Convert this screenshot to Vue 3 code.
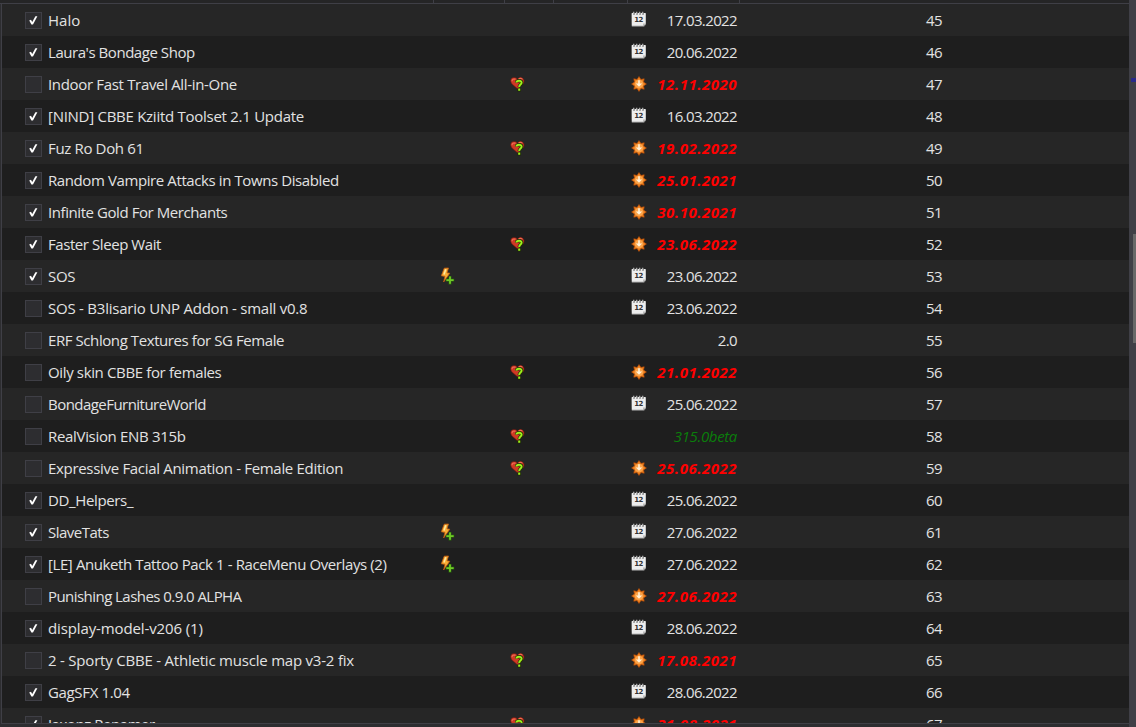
<template>
  <div class="mod-list">
    <div class="list-header">
      <span v-for="n in 6" :key="n"></span>
    </div>

    <div class="rows">
      <div v-for="mod in mods" :key="mod.priority" class="row">
        <div class="checkbox">
          <svg v-if="mod.enabled" width="15" height="15" viewBox="0 0 15 15">
            <path d="M3.2 7.4 L5 6.8 L6.2 8.9 L9.4 3.2 L11.4 3.2 L7 11.6 L5.4 11.6 Z" fill="#fff" />
          </svg>
        </div>
        <div class="name"><span :style="{ letterSpacing: mod.spacing + 'px' }">{{ mod.name }}</span></div>

        <!-- Conflicts -->
        <div class="conflict">
          <svg v-if="mod.conflict" width="16" height="18" viewBox="0 0 16 18">
            <path d="M5.2 1.2 L9.5 1 L8 5.8 L10.8 6.2 L4.6 15 L6 9.4 L2.3 8.8 Z" fill="#f9ad35" stroke="#c05a10" stroke-width=".8" />
            <path d="M6.8 2.2 L5 7.4" stroke="#ffe9a0" stroke-width="1.5" />
            <path d="M11 9 V17.4 M6.8 13.2 H15.2" stroke="#286c08" stroke-width="2.8" />
            <path d="M11 9.6 V16.8 M7.4 13.2 H14.6" stroke="#70c828" stroke-width="1.8" />
          </svg>
        </div>

        <!-- Flags -->
        <div class="flag">
          <svg v-if="mod.flag" width="16" height="16" viewBox="0 0 16 16">
            <path d="M7.8 13 L2 8 C0 5.2 .6 2.4 3 1.8 C5 1.3 6.6 2 7.5 3.2 C8.5 1.8 10.4 1.2 12 1.9 C14.5 3 14.5 6 13 8 Z" fill="#cf3a25" stroke="#7c1a10" stroke-width=".6" />
            <path d="M2 5.2 C2 3.4 3.6 2.6 5.5 3.3 M8.7 2.9 C9.8 2.2 11.2 2.2 12.3 2.9" fill="none" stroke="#ec6e55" stroke-width="1.2" />
            <path d="M6.6 6.5 C6.6 4.2 11.7 3.8 11.7 6.7 C11.7 8.7 9.3 8.5 9.2 11.2 M9.2 12.3 V15.4" fill="none" stroke="#1c2a04" stroke-width="3.4" />
            <path d="M6.4 6.5 C6.6 4.2 11.7 3.9 11.6 6.8 C11.5 8.7 9.2 8.6 9.2 11 M9.2 12.5 V14.7" fill="none" stroke="#9ff01c" stroke-width="2" />
          </svg>
        </div>

        <div class="version" :class="mod.state">
          <svg v-if="mod.state === 'date'" width="16" height="16" viewBox="0 0 16 16">
            <path d="M.5 2.5 H15 V13.6 L13 15.8 H.8 Z" fill="#858585" />
            <path d="M.8 2 H14.6 V12.4 L12.2 14.8 H.8 Z" fill="#ededed" />
            <path d="M12 14.8 V12.4 H14.6 Z" fill="#bcbcbc" />
            <path d="M3 .8 V3.8 M6 .8 V3.8 M9 .8 V3.8 M12 .8 V3.8" stroke="#6c6c6c" stroke-width="1.4" />
            <path d="M2.4 .8 V2.8 M5.4 .8 V2.8 M8.4 .8 V2.8 M11.4 .8 V2.8" stroke="#ddd" stroke-width=".7" />
            <text x="7.6" y="11" text-anchor="middle">12</text>
          </svg>
          <svg v-if="mod.state === 'outdated'" width="16" height="16" viewBox="0 0 16 16">
            <path d="M8 .6 L9.9 3.5 L13.2 2.8 L12.5 6.1 L15.4 8 L12.5 9.9 L13.2 13.2 L9.9 12.5 L8 15.4 L6.1 12.5 L2.8 13.2 L3.5 9.9 L.6 8 L3.5 6.1 L2.8 2.8 L6.1 3.5 Z" fill="#ee8321" stroke="#b94c06" stroke-width=".7" />
            <circle cx="8" cy="8" r="4.3" fill="#fba44a" />
            <path d="M7.2 4.2 H8.8 V7.4 H11.2 L8 10.8 L4.8 7.4 H7.2 Z" fill="#fff1d8" />
          </svg>
          <span>{{ mod.version }}</span>
        </div>
        <div class="priority">{{ mod.priority }}</div>
      </div>
    </div>

    <div class="scrollbar">
      <div class="mark"></div>
      <div class="thumb"></div>
    </div>
  </div>
</template>

<script setup>
// name, version, version state, enabled, letter spacing, extra icon
const entries = [
  ['Halo', '17.03.2022', 'date', true, 0],
  ["Laura's Bondage Shop", '20.06.2022', 'date', true, -0.45],
  ['Indoor Fast Travel All-in-One', '12.11.2020', 'outdated', false, -0.33, 'flag'],
  ['[NIND] CBBE Kziitd Toolset 2.1 Update', '16.03.2022', 'date', true, -0.27],
  ['Fuz Ro Doh 61', '19.02.2022', 'outdated', true, -0.35, 'flag'],
  ['Random Vampire Attacks in Towns Disabled', '25.01.2021', 'outdated', true, -0.4],
  ['Infinite Gold For Merchants', '30.10.2021', 'outdated', true, -0.43],
  ['Faster Sleep Wait', '23.06.2022', 'outdated', true, -0.43, 'flag'],
  ['SOS', '23.06.2022', 'date', true, -0.3, 'conflict'],
  ['SOS - B3lisario UNP Addon - small v0.8', '23.06.2022', 'date', false, -0.23],
  ['ERF Schlong Textures for SG Female', '2.0', 'plain', false, -0.42],
  ['Oily skin CBBE for females', '21.01.2022', 'outdated', false, -0.36, 'flag'],
  ['BondageFurnitureWorld', '25.06.2022', 'date', false, -0.54],
  ['RealVision ENB 315b', '315.0beta', 'beta', false, -0.32, 'flag'],
  ['Expressive Facial Animation - Female Edition', '25.06.2022', 'outdated', false, -0.31, 'flag'],
  ['DD_Helpers_', '25.06.2022', 'date', true, -0.36],
  ['SlaveTats', '27.06.2022', 'date', true, -0.5, 'conflict'],
  ['[LE] Anuketh Tattoo Pack 1 - RaceMenu Overlays (2)', '27.06.2022', 'date', true, -0.4, 'conflict'],
  ['Punishing Lashes 0.9.0 ALPHA', '27.06.2022', 'outdated', false, -0.55],
  ['display-model-v206 (1)', '28.06.2022', 'date', true, -0.12],
  ['2 - Sporty CBBE - Athletic muscle map v3-2 fix', '17.08.2021', 'outdated', false, -0.21, 'flag'],
  ['GagSFX 1.04', '28.06.2022', 'date', true, -0.34],
  ['Jaxonz Renamer', '31.08.2021', 'outdated', true, -0.45, 'flag']
]

const mods = entries.map(([name, version, state, enabled, spacing, icon], i) => ({
  name,
  version,
  state,
  enabled,
  spacing,
  flag: icon === 'flag',
  conflict: icon === 'conflict',
  priority: 45 + i
}))
</script>

<style>
body {
  margin: 0;
  background: #2d2d30;
}
</style>

<style scoped>
.mod-list {
  display: grid;
  grid-template-columns: 1129px 7px;
  grid-template-rows: 4px 719px 4px;
  width: 1136px;
  height: 727px;
  overflow: hidden;
  color: #e2e2e2;
  font: 15px/32px "Open Sans", "Noto Sans", sans-serif;
}

.list-header {
  display: grid;
  grid-template-columns: 434px 71px 49px 74px 112px 1fr;
  box-sizing: border-box;
  background: #252526;
  border-bottom: 1px solid #3f3f46;
}

.list-header span {
  border-right: 1px solid #3f3f46;
}

.list-header span:last-child {
  border-right: 0;
}

.rows {
  box-sizing: border-box;
  margin-left: 1px;
  overflow: hidden;
  border-left: 1px solid #3f3f46;
  border-bottom: 1px solid #3f3f46;
  height: 720px;
}

.row {
  display: grid;
  grid-template-columns: 23px 17px 6px 385px 71px 122px 112px 1fr;
  height: 32px;
  background: #262626;
}

.row:nth-child(even) {
  background: #1e1e1e;
}

.checkbox {
  grid-column: 2;
  box-sizing: border-box;
  width: 17px;
  height: 17px;
  margin-top: 8px;
  border: 1px solid #3f3f46;
  background: #2d2d30;
}

svg {
  display: block;
  flex: none;
}

.name {
  grid-column: 4;
  white-space: nowrap;
}

.conflict {
  padding: 7px 0 0 6px;
}

.flag {
  padding: 8px 0 0 6px;
}

.version {
  display: flex;
  justify-content: space-between;
  padding: 0 1px 0 5px;
  letter-spacing: -0.62px;
}

.version svg {
  margin-top: 8px;
}

.version.date svg {
  margin-top: 7px;
}

.version svg text {
  font: bold 7px "DejaVu Sans", sans-serif;
  letter-spacing: -0.5px;
  fill: #333;
}

.version span {
  margin-left: auto;
}

.outdated span {
  color: #f00;
  font-weight: 700;
  font-style: italic;
  letter-spacing: 0.5px;
}

.beta span {
  color: #0b7d0b;
  font-style: italic;
  letter-spacing: -0.35px;
}

.priority {
  padding-left: 188px;
  letter-spacing: -0.5px;
}

.scrollbar {
  position: relative;
  grid-column: 2;
  grid-row: 1 / 4;
  background: #3f3f46;
}

.thumb {
  position: absolute;
  top: 234px;
  right: 0;
  width: 3px;
  height: 109px;
  background: #686868;
}

.mark {
  position: absolute;
  top: 78px;
  right: 0;
  width: 5px;
  height: 4px;
  background: #28288a;
}
</style>
